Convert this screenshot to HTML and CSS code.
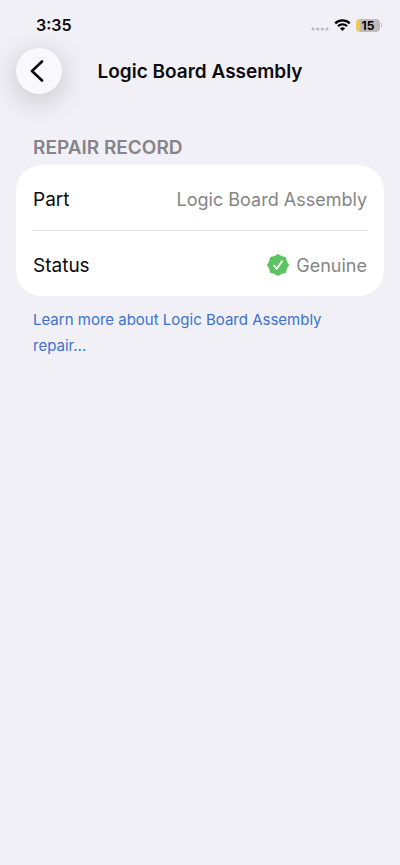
FILE: index.html
```html
<!DOCTYPE html>
<html lang="en">
<head>
<meta charset="utf-8">
<meta name="viewport" content="width=device-width, initial-scale=1">
<title>Logic Board Assembly</title>
<link rel="stylesheet" href="styles.css">
</head>
<body>
<div class="status-bar">
  <time class="clock">3:35</time>
  <div class="indicators">
    <svg class="signal" viewBox="0 0 18 4" aria-hidden="true">
      <circle cx="2" cy="2" r="1.6"/><circle cx="6.7" cy="2" r="1.6"/><circle cx="11.4" cy="2" r="1.6"/><circle cx="16.1" cy="2" r="1.6"/>
    </svg>
    <svg class="wifi" viewBox="0 0 17 12" aria-hidden="true">
      <path d="M1.2 4.3A10.6 10.6 0 0 1 15.8 4.3M4 7.2A6.6 6.6 0 0 1 13 7.2" fill="none" stroke="#000" stroke-width="2.3"/>
      <path d="M8.5 12 5.9 9.3A3.9 3.9 0 0 1 11.1 9.3Z"/>
    </svg>
    <div class="battery"><span class="battery-level">15</span></div>
  </div>
</div>
<header class="nav">
  <button class="back" type="button" aria-label="Back">
    <svg viewBox="0 0 14 22" aria-hidden="true"><path d="M12 1.5 2 11l10 9.5"/></svg>
  </button>
  <h1 class="title">Logic Board Assembly</h1>
</header>
<main class="content">
  <h2 class="section-title">REPAIR RECORD</h2>
  <dl class="card">
    <div class="row">
      <dt>Part</dt>
      <dd>Logic Board Assembly</dd>
    </div>
    <div class="row">
      <dt>Status</dt>
      <dd>
        <svg class="badge" viewBox="0 0 24 24" aria-hidden="true">
          <path class="seal" d="M12 2 15.3 4.1 19.1 4.9 19.9 8.7 22 12 19.9 15.3 19.1 19.1 15.3 19.9 12 22 8.7 19.9 4.9 19.1 4.1 15.3 2 12 4.1 8.7 4.9 4.9 8.7 4.1Z"/>
          <path class="check" d="M8.1 12.6 10.9 15.8 16 8.2"/>
        </svg>
        Genuine
      </dd>
    </div>
  </dl>
  <p class="footnote"><a href="#repair">Learn more about Logic Board Assembly repair...</a></p>
</main>
</body>
</html>
```
FILE: styles.css
```css
* {
  box-sizing: border-box;
}

body {
  margin: 0;
  min-height: 100vh;
  background: #f1f0f6;
  color: #0b0b0d;
  font-family: Inter, "Liberation Sans", sans-serif;
}

.status-bar {
  display: flex;
  align-items: center;
  justify-content: space-between;
  height: 48px;
  padding: 2px 18px 0 36px;
}

.clock {
  font-size: 16px;
  font-weight: 600;
}

.indicators {
  display: flex;
  align-items: center;
  gap: 5px;
}

.signal {
  width: 18px;
  height: 4px;
  margin-top: 8px;
  fill: #bbbac0;
}

.wifi {
  width: 17px;
  height: 12px;
}

.battery {
  display: flex;
  align-items: center;
}

.battery-level {
  width: 24px;
  border-radius: 4px;
  background: linear-gradient(90deg, #f3c84f 4px, #bcbbc0 4px);
  font-size: 12px;
  font-weight: 700;
  line-height: 13px;
  text-align: center;
  color: #000;
}

.battery::after {
  content: "";
  width: 1px;
  height: 4px;
  margin-left: 1px;
  background: #bcbbc0;
}

.nav {
  display: grid;
  grid-template-columns: 46px 1fr 46px;
  align-items: center;
  padding: 0 16px;
}

.back {
  display: flex;
  align-items: center;
  justify-content: center;
  width: 46px;
  height: 46px;
  padding: 0 4px 0 0;
  border: 0;
  border-radius: 50%;
  background: #f9f8fd;
  box-shadow: 0 6px 30px rgba(0, 0, 0, 0.2);
}

.back svg {
  width: 14px;
  height: 22px;
  fill: none;
  stroke: #0b0b0d;
  stroke-width: 2.6;
  stroke-linecap: round;
  stroke-linejoin: round;
}

.title {
  margin: 0;
  padding-top: 2px;
  font-size: 19px;
  font-weight: 600;
  line-height: 24px;
  text-align: center;
}

.content {
  padding: 42px 16px 0;
}

.section-title {
  margin: 0 17px 5px;
  font-size: 19px;
  font-weight: 600;
  line-height: 24px;
  color: #85848a;
}

.card {
  margin: 0;
  padding: 0 16px;
  border-radius: 26px;
  background: #fff;
}

.row {
  display: flex;
  align-items: center;
  justify-content: space-between;
  min-height: 65px;
  padding: 3px 1px 0;
  font-size: 19px;
}

.row + .row {
  min-height: 66px;
  border-top: 1px solid #e2e2e4;
}

.row dd {
  display: flex;
  align-items: center;
  gap: 6px;
  margin: 0;
  font-size: 18px;
  color: #858585;
}

.badge {
  width: 24px;
  height: 24px;
}

.seal {
  fill: #5ec463;
  stroke: #5ec463;
  stroke-width: 2;
  stroke-linejoin: round;
}

.check {
  fill: none;
  stroke: #fff;
  stroke-width: 1.8;
  stroke-linecap: round;
  stroke-linejoin: round;
}

.footnote {
  margin: 11px 17px 0;
  font-size: 15px;
  line-height: 26px;
}

.footnote a {
  color: #3b73d1;
  text-decoration: none;
}
```
